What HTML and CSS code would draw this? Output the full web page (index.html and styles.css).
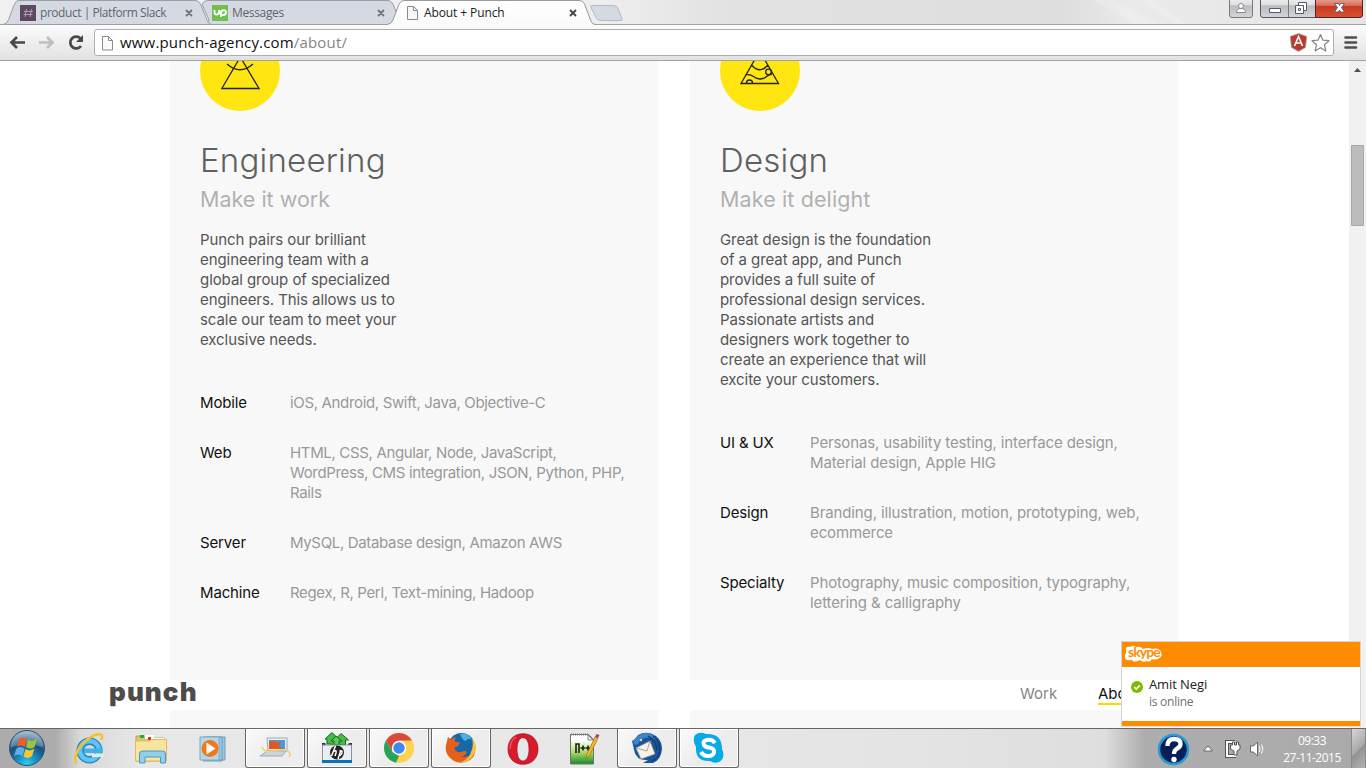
FILE: index.html
```html
<!DOCTYPE html>
<html lang="en">
<head>
<meta charset="utf-8">
<title>About + Punch</title>
<link rel="stylesheet" href="styles.css">
</head>
<body>
<header class="chrome">
  <svg class="tabstrip" width="1366" height="61" viewBox="0 0 1366 61">
    <defs>
      <linearGradient id="frame"><stop offset="0" stop-color="#f0f0f0"/><stop offset=".15" stop-color="#f2f2f2"/><stop offset=".45" stop-color="#ededed"/><stop offset=".53" stop-color="#e2e2e2"/><stop offset=".78" stop-color="#dedede"/><stop offset=".83" stop-color="#eaeaea"/><stop offset="1" stop-color="#e5e5e5"/></linearGradient>
      <linearGradient id="bar" x2="0" y2="1"><stop offset="0" stop-color="#fbfbfb"/><stop offset="1" stop-color="#e1e1e1"/></linearGradient>
      <linearGradient id="tab" x2="0" y2="1"><stop offset="0" stop-color="#fff"/><stop offset="1" stop-color="#fafafa"/></linearGradient>
      <linearGradient id="btn" x2="0" y2="1"><stop offset="0" stop-color="#f0f0f1"/><stop offset=".35" stop-color="#dedee0"/><stop offset=".4" stop-color="#bbbcc0"/><stop offset="1" stop-color="#d4d5d8"/></linearGradient>
      <linearGradient id="red" x2="0" y2="1"><stop offset="0" stop-color="#e9a99a"/><stop offset=".38" stop-color="#d7715a"/><stop offset=".42" stop-color="#c43a22"/><stop offset="1" stop-color="#d9512f"/></linearGradient>
    </defs>
    <path fill="url(#frame)" d="M0 0H1366V25H0z"/>
    <path fill="#fff" opacity=".18" d="M1095 0h20l45 25h-25zM1140 0h12l35 25h-10z"/>
    <path fill="url(#bar)" d="M0 25H1366V61H0z"/>
    <path stroke="#a2a2a2" d="M0 24.5H1366"/>
    <path fill="#d5dae2" stroke="#9b9ea3" d="M205 24.5Q208 23.5 209 20L202 4Q203.500.5 208 .5H388Q391 .5 393 4L401 24.500z"/>
    <path fill="#d5dae2" stroke="#9b9ea3" d="M3 24.500Q7 24 8.500 20L14.500 4Q16 .5 19 .5H195Q199 .5 200.500 4L207 20Q208.500 24 211 24.500z"/>
    <path fill="#fafafa" d="M388 24h206v2H388z"/>
    <path fill="url(#tab)" d="M388 25Q391.500 24 393 20L399 4Q401 .5 404 .5H579Q583 .5 584.500 4L590.500 20Q592 25 595 25z"/>
    <path fill="none" stroke="#999" d="M387 24.500Q391.500 24 393 20L399 4Q401 .5 404 .5H579Q583 .5 584.500 4L590.500 20Q592 24.500 595 24.500"/>
    <path fill="#d4dae3" stroke="#b6b9bf" d="M592 5.500h21q4 0 5 3l4 10q1 2-2 2h-18q-5 0-6-3l-5-10q-1-2 1-2z"/>
    <path fill="#5d4862" d="M20 5h16v16H20z"/><path fill="#6fc14b" d="M212 5h16v16H212z"/>
    <path fill="none" stroke="#b79bb9" stroke-width="1" d="M26.500 9l-1.500 8M31.500 9L30 17M24 11.500h9M23.500 14.500h9"/>
    <path fill="none" stroke="#fff" stroke-width="1.900" d="M214.500 10v2q0 2.500 2.200 2.500t2.300-2.500v-2M219 10q1 4 2.500 5M221 17v-4q0-2.800 2.500-2.800t2.500 2.300-3 2.500l-2-1"/>
    <g fill="none" stroke="#71747b" stroke-width="1.800"><path d="M186 10l6 6m0-6l-6 6M378 10l6 6m0-6l-6 6"/><path stroke="#444" d="M570 10l6 6m0-6l-6 6"/></g>
    <path fill="#f8f8f8" stroke="#8b8b8b" d="M407.500 6.500h6l4 4v9h-10zM413.500 6.500v4h4"/>
    <path fill="#fff" stroke="#adadad" d="M97 29.500H1331q2.500 0 2.500 2.500V53q0 2.500-2.500 2.500H97q-2.500 0-2.500-2.500V32q0-2.500 2.500-2.500z"/>
    <path fill="#fafafa" stroke="#8b8b8b" d="M102.500 36.500h6l4 4v9.500h-10zM108.500 36.500v4h4"/>
    <g fill="none" stroke-width="2.700"><path stroke="#484848" d="M25 42.500H12M17 37l-5.500 5.500L17 48"/><path stroke="#bfbfbf" d="M39 42.500h13M47 37l5.500 5.500L47 48"/><path stroke="#484848" d="M80.500 38.500A5.900 5.900 0 1 0 81 46"/></g><path fill="#484848" d="M83 35v7h-7z"/>
    <g stroke="#77797d" stroke-width="1"><path fill="url(#btn)" d="M1229.500-2H1252.500V15q0 2.500-2.500 2.500h-18q-2.500 0-2.500-2.500z"/><path fill="url(#btn)" stroke="#555765" d="M1260.500-2H1315.500V17.500H1263q-2.500 0-2.500-2.500z"/><path fill="url(#red)" stroke="#50242b" d="M1315.500-2H1362.500V15q0 2.500-2.500 2.500H1315.500z"/><path d="M1288.500 0v17"/></g>
    <g fill="#fff" stroke="#888"><circle cx="1241" cy="6" r="2.500"/><path d="M1236.500 12.500q0-4 4.500-4t4.500 4z"/></g>
    <g fill="#fff" stroke="#55576d"><path d="M1269.500 8.500h11v4h-11zM1298.500 2.500h8v8h-8z"/><path d="M1295.500 5.500h8v8h-8z"/><path d="M1298.500 8.500h2v2h-2z"/></g>
    <path fill="#fff" stroke="#5e5670" stroke-width=".9" d="M1334.500 3.500h4l1 2 1-2h4l-3 4 3 4.500h-4l-1-2-1 2h-4l3-4.500z"/>
    <path fill="#b93b2e" stroke="#aaa" stroke-width=".8" d="M1298.500 33.500l8.300 3-1.300 11-7 4-7-4-1.300-11z"/><path fill="none" stroke="#fff" stroke-width="1.600" d="M1294.500 46l4-9.500 4 9.500M1296 43h5"/>
    <path fill="#fff" stroke="#858585" stroke-width="1.200" stroke-linejoin="round" d="M1320.500 34.500l2.500 5.700 6 .5-4.500 4.100 1.400 6.200-5.400-3.300-5.400 3.300 1.400-6.200-4.500-4.100 6-.5z"/>
    <path stroke="#4f4f4f" stroke-width="2.600" stroke-linecap="round" d="M1345.500 37.500h10.500M1345.500 42.500h10.500M1345.500 47.500h10.500"/>
    <path stroke="#a3a3a6" d="M0 60.500H1366"/>
  </svg>
  <span class="tab-title tab-slack">product | Platform Slack</span>
  <span class="tab-title tab-messages">Messages</span>
  <span class="tab-title tab-about">About + Punch</span>
  <span class="url">www.punch-agency.com<i>/about/</i></span>
</header>

<main class="viewport">
  <div class="page">
    <section class="card engineering">
      <svg class="badge" viewBox="0 0 80 80"><circle cx="40" cy="40" r="40" fill="#ffe610"/><path fill="none" stroke="#222" stroke-width="1.300" d="M21.800 57.500H59L40.300 26zM27 33Q40 44.500 53 33"/></svg>
      <h2>Engineering</h2>
      <h3>Make it work</h3>
      <p>Punch pairs our brilliant<br>engineering team with a<br>global group of specialized<br>engineers. This allows us to<br>scale our team to meet your<br>exclusive needs.</p>
      <dl>
        <dt>Mobile</dt><dd>iOS, Android, Swift, Java, Objective-C</dd>
        <dt>Web</dt><dd>HTML, CSS, Angular, Node, JavaScript,<br>WordPress, CMS integration, JSON, Python, PHP,<br>Rails</dd>
        <dt>Server</dt><dd>MySQL, Database design, Amazon AWS</dd>
        <dt>Machine</dt><dd>Regex, R, Perl, Text-mining, Hadoop</dd>
      </dl>
    </section>
    <section class="card design">
      <svg class="badge" viewBox="0 0 80 80"><circle cx="40" cy="40" r="40" fill="#ffe610"/><path fill="none" stroke="#222" stroke-width="1.300" d="M21 52.500H58.500L39.700 20zM31.500 34Q40 43.500 48 34M26 44C33 42 33 48 40 48C46 48 46 44 52 43M26.500 52a3 3 0 0 1 6 0"/><circle cx="48.500" cy="41" r="2.800" fill="none" stroke="#222" stroke-width="1.300"/></svg>
      <h2>Design</h2>
      <h3>Make it delight</h3>
      <p>Great design is the foundation<br>of a great app, and Punch<br>provides a full suite of<br>professional design services.<br>Passionate artists and<br>designers work together to<br>create an experience that will<br>excite your customers.</p>
      <dl>
        <dt>UI &amp; UX</dt><dd>Personas, usability testing, interface design,<br>Material design, Apple HIG</dd>
        <dt>Design</dt><dd>Branding, illustration, motion, prototyping, web,<br>ecommerce</dd>
        <dt>Specialty</dt><dd>Photography, music composition, typography,<br>lettering &amp; calligraphy</dd>
      </dl>
    </section>
    <section class="card"></section>
    <section class="card"></section>
  </div>
  <div class="scrollbar">
    <svg width="17" height="667" viewBox="0 0 17 667"><path fill="#f1f1f1" d="M0 0h17v667H0z"/><path fill="#505050" d="M5 11l3.500-4L12 11zM5 656l3.500 4 3.500-4z"/><path fill="#bcbcbc" stroke="#a8a8a8" d="M2.500 84.500h12v80h-12z"/></svg>
  </div>
  <nav class="site-nav"><span class="brand">punch</span><span class="work">Work</span><span class="about">About</span></nav>
</main>

<footer class="taskbar">
  <div class="start"><svg width="38" height="38" viewBox="0 0 38 38">
    <defs><radialGradient id="orb" cx=".5" cy=".95" r=".9"><stop offset="0" stop-color="#25d0f5"/><stop offset=".35" stop-color="#1787bd"/><stop offset=".65" stop-color="#174f7d"/><stop offset="1" stop-color="#83a6bd"/></radialGradient></defs>
    <circle cx="19" cy="19" r="17.500" fill="url(#orb)" stroke="#31516a"/><path fill="#fff" opacity=".22" d="M3 18a16 16 0 0 1 32 0Q19 13 3 18z"/>
    <path fill="#e9602c" d="M11 10q4-3 8 0l-2 8q-4-3-8 0z"/><path fill="#9ac63b" d="M20 10.500q4 3 9-.5l-2.500 8q-4 3-8.500 0z"/><path fill="#62aee8" d="M8.500 19.500q4-3 8 0l-2 7.500q-4-3-8.500 0z"/><path fill="#fbc52d" d="M17.500 20q4 3 9-.5L24 27q-4 3.500-8.500.5z"/></svg></div>
  <div class="app"><svg viewBox="0 0 32 32"><circle cx="16.500" cy="17.500" r="9.300" fill="none" stroke="#2488cf" stroke-width="7.500"/><circle cx="16.500" cy="17.500" r="9.500" fill="none" stroke="#62c4f5" stroke-width="4.500"/><path fill="#e7e7e7" d="M19 20.500h12v3.500H19z"/><path fill="#3fb0ea" d="M11 15.500h18.500v4.500H11z"/><path fill="none" stroke="#f6c22c" stroke-width="2.600" d="M4 30C-1 27 5 13 15 6S32 0 28 7"/></svg></div>
  <div class="app"><svg viewBox="0 0 32 32"><path fill="#e3c263" stroke="#c6a34b" d="M1 3h9l2 2h17v23H1z"/><path fill="#24aa38" d="M5 2h4v3H5z"/><path fill="#fff" d="M10 2h9v4h-9z"/><path fill="#c93725" d="M13 4h3v3h-3z"/><path fill="#fff" d="M19 5h10v4H19z"/><path fill="#278ccf" d="M21 6h4v3h-4z"/><path fill="#f8e49d" stroke="#d9bc6a" d="M.500 8h14l2-1.500h15V28H.500z"/><path fill="#91cdec" stroke="#5296bd" d="M4.500 30v-9q0-3 3-3h20q3 0 3 3v9h-5v-6H10v6z"/></svg></div>
  <div class="app"><svg viewBox="0 0 32 32"><path fill="#9cc7df" stroke="#6b9cba" d="M10 4h18v23H10zM6 4h19v24H6z"/><path fill="#b5d8e9" stroke="#7eaac3" d="M3 4h19v23H3z"/><circle cx="13" cy="15.500" r="8.500" fill="#f07819"/><path fill="#fff" d="M9.500 9.500l9 6-9 6z"/></svg></div>
  <div class="app open"><svg viewBox="0 0 32 32"><path fill="#eee" stroke="#9aa8b6" d="M8 6h20v13H9z"/><path fill="#4e99cf" d="M10 8h16v9H10z"/><path fill="#e35624" d="M10 9l3 1 2-2 2 3 5-1-2 3 2 4H10z"/><path fill="#cbd5df" stroke="#9fabb8" d="M8 19h19l-4 5H1z"/><path fill="none" stroke="#f3cf68" stroke-width="1.500" d="M3 15q2 6 12 4 12-3 15 1 2 3 0 5"/></svg></div>
  <div class="app open"><svg viewBox="0 0 32 32"><path fill="#48ba45" stroke="#116b21" d="M6 12V7H4l7-6.500 5 5 4-4L27.500 8h-3v5z"/><path fill="#5ccb51" stroke="#116b21" d="M13 13V9h-3l5-5 6 5h-3v4z"/><path fill="#333" d="M1 11h3l2 3h20l2-3h3v5H1z"/><path fill="#e9eef3" stroke="#8893a0" d="M1.500 13h29v16h-29z"/><path fill="#0875ba" d="M1 28h30v3H1z"/><circle cx="16" cy="20.500" r="7" fill="#222"/><path fill="none" stroke="#fff" stroke-width="1.500" d="M14.500 14l-4 10M12 20q4-3 3 1l-1 3M20 18l-3 9M18.500 19q4-1 2 3-1 2-3 2"/></svg></div>
  <div class="app open"><svg viewBox="0 0 32 32"><circle cx="16" cy="16" r="15" fill="#fcd34f"/><path fill="#da4a3c" d="M3 8.500a15 15 0 0 1 26 0H16L9 19z"/><path fill="#26a45a" d="M3 8.500L9.500 20l6.500 4-3 6.700A15 15 0 0 1 3 8.500z"/><circle cx="16" cy="16" r="7.200" fill="#fff"/><circle cx="16" cy="16" r="5.700" fill="#4087ef"/></svg></div>
  <div class="app open"><svg viewBox="0 0 32 32"><circle cx="16.500" cy="14.500" r="13.500" fill="#1668a8"/><path fill="#4db2df" d="M15 2q8-2 12 6-4-3-6 1-4-1-6-7z"/><path fill="#e4611b" d="M3 5l3 2.500Q8 5 11 5.500q-2 2.500-1 4l5 1-2 3.500-4 2q2 5 7 4 4-2 6 0-2 4-6 5 11 1 14-9 1 8-5 12-8 5-16 1Q-1 23 1 13q1-4 2-8z"/><path fill="#f7c239" d="M27 6q7 9 2 16-4 8-14 9 10-5 11-11 3-6 1-14z"/></svg></div>
  <div class="app"><svg viewBox="0 0 32 32"><path fill="#d9192c" stroke="#a90c1d" stroke-width=".7" fill-rule="evenodd" d="M16 .7C6 .7 1 8 1 16s5 15.300 15 15.300S31 24 31 16 26 .7 16 .7zm0 4c4 0 6 5 6 11.500S20 28 16 28s-6-5-6-11.500S12 4.700 16 4.700z"/><path fill="none" stroke="#ff6872" stroke-width="1.500" opacity=".7" d="M9 4Q3 8 3 16"/></svg></div>
  <div class="app"><svg viewBox="0 0 32 32"><defs><linearGradient id="np" x2="0" y2="1"><stop offset=".2" stop-color="#fff"/><stop offset=".6" stop-color="#afd967"/><stop offset="1" stop-color="#168b2d"/></linearGradient></defs><path fill="url(#np)" stroke="#68776c" d="M1.500 1.500h18l5 5V31h-23z"/><path stroke="#777" stroke-dasharray="1 1" stroke-width="2" d="M2 1.500h18"/><path fill="#eee" stroke="#888" d="M19 2v5h5z"/><path fill="none" stroke="#16221c" stroke-width="1.600" d="M7 20v-9h3v9M11.500 15h5m-2.500-2.500v5M17 15h4m-2-2.500v5"/><path fill="#efb72d" stroke="#9b711f" stroke-width=".7" d="M17 26l1-5 8-17 3 1-8 17z"/><path fill="#b1414b" d="M26 4l1.500-3 3 1-1.500 3z"/></svg></div>
  <div class="app open"><svg viewBox="0 0 32 32"><path fill="#1a559b" d="M1 9q4-2 6-6Q16-2 25 4q6 5 6 13-1 11-9 14H12l5-3q-12 1-14-10L2 13z"/><path fill="#3a86c8" d="M2 9q5-7 12-8 9 0 14 9-7-6-14-4Q9 7 7 12l-3 1z"/><path fill="none" stroke="#133b76" stroke-width="1.300" d="M17 4q9 4 9 15M22 4q7 5 7 15M29 19q-1 7-8 10"/><path fill="#f6f3e9" stroke="#9d978a" stroke-width=".8" d="M5 16L19 9l5 13-14 5z"/><path fill="none" stroke="#aaa498" d="M5 16l11 3 3-10"/><circle cx="10" cy="8" r="1.200" fill="#f0d48a"/></svg></div>
  <div class="app open"><svg viewBox="0 0 32 32"><path fill="#09a9e5" d="M2 3q5-4 11-1Q29 1 29 17q4 9-3 13-5 2-9-1Q2 30 3 15-1 8 2 3z"/><path fill="none" stroke="#fff" stroke-width="4" d="M22 11q-3-4-8-3-5 1-3 5 1 2 5 2.500 6 1 5 5-1 4-7 3.500-4-.5-6-4"/></svg></div>

  <div class="tray">
    <svg class="help" width="33" height="33" viewBox="0 0 33 33"><circle cx="16.500" cy="16.500" r="14.500" fill="#081f57" stroke="#239bd3" stroke-width="2.500"/><path fill="none" stroke="#fff" stroke-width="4.300" d="M10.500 13q0-7 6.500-7t6.500 5q0 3-4 5-2.500 1.500-2.500 5"/><circle cx="17" cy="26.500" r="2.700" fill="#fff"/></svg>
    <svg class="tray-icons" width="40" height="22" viewBox="0 0 40 22"><path fill="#fff" stroke="#666" d="M2.500 13l4.500-5 4.500 5z"/><g fill="none"><path stroke="#555" stroke-width="4" d="M34 4h-8v14h9"/><path stroke="#fff" stroke-width="2" d="M34 4h-8v14h9"/><path fill="#fff" stroke="#555" d="M29.500 7h2V4h2v3h2V4h2v3h1.500v4l-3 2v4h-3v-4l-3.500-2z"/></g></svg>
    <svg class="sound" width="18" height="20" viewBox="0 0 18 20"><path fill="#fff" stroke="#666" d="M2.500 7h3L9.500 3v14l-4-4h-3z"/><path fill="none" stroke="#fff" d="M11.500 7q1 3 0 6M13.500 5.500q3 4.500 0 9"/></svg>
    <div class="clock"><span>09:33</span><span>27-11-2015</span></div>
    <div class="peek"></div>
  </div>
</footer>

<aside class="toast">
  <div class="toast-head"><svg width="40" height="20" viewBox="0 0 40 20"><path fill="#fff" d="M1 6Q0 1 5 2q3-2 6 0 5-1 7 2 6-2 9 0 7-2 9 3 2 5-3 7-4 1-6 0-2 4-5 2-4 2-7-1-6 3-8 0-6 1-7-2-2-4 1-4z"/></svg><span class="skype">skype</span></div>
  <div class="toast-body"><svg width="12" height="12" viewBox="0 0 12 12"><circle cx="6" cy="6" r="6" fill="#7fba00"/><path fill="none" stroke="#fff" stroke-width="1.600" d="M3.200 6l2 2 3.600-3.600"/></svg><div><b>Amit Negi</b><small>is online</small></div></div>
</aside>
</body>
</html>
```
FILE: styles.css
```css
* { box-sizing: border-box; }
body { margin: 0; width: 1366px; height: 768px; overflow: hidden; display: flex; flex-direction: column; background: #fff; position: relative; font-family: Inter, Roboto, sans-serif; }
svg { display: block; flex: none; }
.chrome { height: 61px; flex: none; position: relative; font-family: "Open Sans", "Noto Sans", sans-serif; white-space: nowrap; }
.tab-title { position: absolute; top: 5px; font-size: 12px; line-height: 16px; color: #62646b; }
.tab-slack { left: 40px; letter-spacing: -.45px; }
.tab-messages { left: 232px; letter-spacing: -.35px; }
.tab-about { left: 424px; color: #222; letter-spacing: -.1px; }
.url { position: absolute; left: 120px; top: 31px; font-size: 15px; line-height: 22px; color: #111; letter-spacing: .17px; }
.url i { font-style: normal; color: #858585; }
.viewport { height: 667px; flex: none; display: flex; overflow: hidden; position: relative; }
.page { width: 1349px; display: grid; grid-template-columns: 489px 489px; grid-template-rows: 619px 18px; gap: 30px 31px; padding-left: 170px; align-content: start; }
.card { background: #f8f8f8; padding: 0 30px; white-space: nowrap; }
.badge { width: 80px; height: 80px; margin-top: -30px; }
h2, h3, p, dl, dd { margin: 0; }
h2 { margin-top: 24px; height: 50px; line-height: 50px; font-size: 33px; font-weight: 300; color: #606060; letter-spacing: .2px; }
h3 { height: 29px; line-height: 29px; font-size: 21.5px; font-weight: 400; color: #b1b1b1; letter-spacing: 0; }
.design h3 { letter-spacing: .12px; }
p { margin-top: 16px; font-size: 15px; line-height: 20px; color: #555; letter-spacing: -.07px; }
dl { margin-top: 43px; display: grid; grid-template-columns: 90px 1fr; row-gap: 30px; font-size: 15px; line-height: 20px; letter-spacing: -.34px; }
.design dl { letter-spacing: -.12px; }
dt { color: #111; letter-spacing: -.15px; }
dd { color: #999; }
.scrollbar { width: 17px; }
.site-nav { position: absolute; left: 109px; top: 617px; width: 1048px; height: 30px; display: flex; }
.brand { width: 911px; font: 900 26px/28px Inter, sans-serif; color: #4c4c4c; letter-spacing: 1.1px; }
.work, .about { font-size: 15px; line-height: 32px; color: #858585; }
.work { width: 78px; }
.about { color: #111; height: 27px; border-bottom: 2px solid #ffd800; }
.taskbar { height: 40px; flex: none; display: flex; border-top: 1px solid #666; background: linear-gradient(90deg, #acacac 0, #acacac 55px, #d8d8d8 80px, #e7e7e7 140px, #e8e8e8 600px, #e4e4e4 900px, #dedede 1105px, #adadad 1145px, #aaa 100%); }
.start { width: 57px; padding: 0 8px; }
.app { width: 60px; height: 39px; margin: 0 0 0 2px; display: flex; align-items: center; justify-content: center; }
.app svg { width: 32px; height: 32px; }
.open { border: 1px solid #666; border-top: 0; border-radius: 0 0 3px 3px; background: linear-gradient(135deg, #fafafa, #ececec 55%, #eee); box-shadow: inset 0 0 0 1px #fff; }
.tray { margin-left: auto; display: flex; height: 39px; color: #fff; font: 12px/17px "Open Sans", "Noto Sans", sans-serif; }
.help { margin: 4px 11px 0 0; }
.tray-icons { margin: 9px 7px 0 0; }
.sound { margin: 10px 0 0; }
.clock { width: 78px; margin-left: 7px; padding-top: 3px; display: flex; flex-direction: column; align-items: center; letter-spacing: -.5px; }
.peek { width: 15px; border: 1px solid #888; border-width: 0 1px; background: linear-gradient(135deg, #d6d6d6, #aaa 50%, #929292 55%, #b3b3b3); }
.toast { position: absolute; left: 1121px; top: 641px; width: 240px; height: 86px; background: #fff; border: 1px solid #d4d4d4; border-bottom: 1px solid #ddd; box-shadow: inset 0 -5px #ff8c00; font-family: "Open Sans", "Noto Sans", sans-serif; }
.toast-head { height: 25px; background: #ff8c00; padding: 3px 0 0 3px; position: relative; }
.skype { position: absolute; left: 6px; top: 1px; font: 700 14px/18px Lato, sans-serif; color: #ff8c00; letter-spacing: -.9px; }
.toast-body { display: flex; gap: 6px; padding: 9px 0 0 9px; }
.toast-body svg { margin-top: 5px; }
.toast-body b { display: block; font-weight: 400; font-size: 13px; line-height: 17px; color: #222; letter-spacing: -.1px; }
.toast-body small { display: block; font-size: 12px; line-height: 17px; color: #707070; letter-spacing: -.25px; }
```
